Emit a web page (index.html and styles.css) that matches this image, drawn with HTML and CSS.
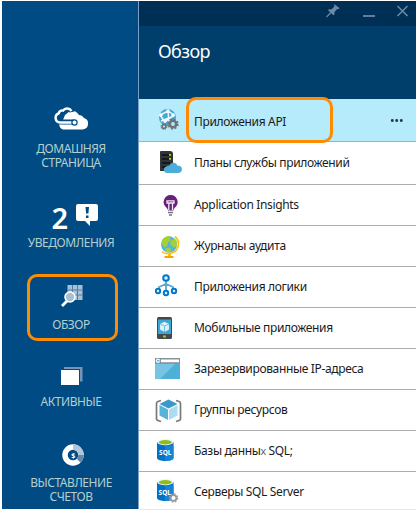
FILE: index.html
```html
<!DOCTYPE html>
<html lang="ru">
<head>
<meta charset="utf-8">
<title>Обзор</title>
<link rel="stylesheet" href="styles.css">
</head>
<body>
<div class="app">
  <nav class="side">
    <a class="tile home">
      <svg width="34" height="24" viewBox="0 0 34 24"><path d="M9 22.500a6 6 0 0 1-.5-11A9 9 0 0 1 25 8a6 6 0 0 1 5 3 5.900 5.900 0 0 1-1.500 11.500z" fill="#fff"/><path d="M20 15H6a4.200 4.200 0 0 1-.5-8.300C5 4 8 3.500 9 4c2-3.500 8-3 9 1" fill="none" stroke="#004b84" stroke-width="5"/><path d="M4 6h5l2-3 5 1-5 4-2 5-5 1z" fill="#004b84"/><path d="M20 15.500H6a4.700 4.700 0 0 1-1.300-9.100C5.300 4 7.500 3 9 3.600 11 .5 15.500 1 17.500 4" fill="none" stroke="#fff" stroke-width="2.400"/><circle cx="20.500" cy="15.500" r="2.600" fill="#fff" stroke="#004b84" stroke-width="1.200"/></svg>
      <span>ДОМАШНЯЯ<br>СТРАНИЦА</span>
    </a>
    <a class="tile notes">
      <div class="count"><b>2</b><svg width="22" height="22" viewBox="0 0 22 22"><path d="M2 0h18q2 0 2 2v13q0 2-2 2h-6v5l-5-5H2q-2 0-2-2V2q0-2 2-2z" fill="#fff"/><path d="M9.500 3h3.500l-.6 6.500h-2.300zM10 11.500h2.500V14H10z" fill="#004b84"/></svg></div>
      <span>УВЕДОМЛЕНИЯ</span>
    </a>
    <a class="tile browse">
      <svg width="22" height="22" viewBox="0 0 22 22"><path d="M6.500 0h15v15h-15z" fill="#a9bfd4"/><path d="M6.500 5h15M6.500 10h15M11.500 0v15M16.500 0v15" stroke="#4f7fa8"/><path d="M6 16l-5 5" stroke="#fff" stroke-width="2.800"/><circle cx="9" cy="12" r="5" fill="#a9bfd4" stroke="#fff" stroke-width="1.600"/></svg>
      <span>ОБЗОР</span>
    </a>
    <a class="tile active">
      <svg width="22" height="18" viewBox="0 0 22 18"><path d="M3 0h18.500v14.500H3z" fill="#7396b8"/><path d="M0 2h19v16H0z" fill="#004b84"/><path d="M0 3h18v15H0z" fill="#fff"/></svg>
      <span>АКТИВНЫЕ</span>
    </a>
    <a class="tile bill">
      <svg width="22" height="22" viewBox="0 0 22 22"><circle cx="11" cy="11" r="8" fill="none" stroke="#fff" stroke-width="5.500"/><path d="M11 3a8 8 0 0 1 8 8" fill="none" stroke="#b3c5da" stroke-width="5.500"/><path d="M19 11a8 8 0 0 1-2.300 5.700" fill="none" stroke="#6089b0" stroke-width="5.500"/><text class="dollar" x="11" y="13.500">$</text></svg>
      <span>ВЫСТАВЛЕНИЕ<br>СЧЕТОВ</span>
    </a>
  </nav>
  <main class="blade">
    <div class="bar">
      <svg width="88" height="14" viewBox="0 0 88 14" stroke="#6b8aa5" fill="none"><path d="M8 0l5.500 4-1 1.200-1.300-.2-2.700 3 0 2.200-1 1-5.500-5 1-1 2.400.2 3-3z" fill="#6b8aa5" stroke="none"/><path d="M5 8.500L.5 13" stroke-width="1.300"/><path d="M37 12h12" stroke-width="1.800"/><path d="M71.500 2l10 10M81.500 2l-10 10" stroke-width="1.500"/></svg>
    </div>
    <header><h1>Обзор</h1></header>
    <ul class="list">
      <li class="on"><svg viewBox="0 0 28 28"><circle cx="12.500" cy="11.500" r="8.500" fill="#45a9d6"/><path d="M5 9l8-4 6 4-9 7zM13 5l1 12M6 15l13-5M10 16L5 9" fill="none" stroke="#eefaff" stroke-width="1.400"/><g fill="#eefaff"><circle cx="13" cy="5" r="1.800"/><circle cx="6" cy="9" r="1.800"/><circle cx="10" cy="15" r="1.800"/><circle cx="18" cy="9" r="1.800"/></g><g fill="#b5ebfa" stroke="#6d7377"><circle cx="18" cy="18" r="3.200" stroke-width="2.600"/><circle cx="18" cy="18" r="4.900" stroke-width="1.500" stroke-dasharray="2 1.850" fill="none"/><circle cx="9" cy="20.500" r="1.900" stroke-width="1.600"/><circle cx="9" cy="20.500" r="3" stroke-width="1" stroke-dasharray="1.200 1.150" fill="none"/></g></svg><span>Приложения API</span><i class="dots"></i></li>
      <li><svg viewBox="0 0 28 28"><path d="M6 2h9q3 0 3 3v17H5V3q0-1 1-1z" fill="#303437"/><path d="M7 6h8M7 10h8M7 14h8M7 18h4" stroke="#0c0e0f" stroke-width="1.500"/><path d="M14 5.800h2M14 9.800h2" stroke="#a7d437" stroke-width="1.800"/><path d="M12 24a3.300 3.300 0 0 1-.5-6.500c1-1 2-1.200 3-1 1.500-4 7-3.500 8 .3 3.500-.6 5 2 4.300 4.500-.5 1.700-2 2.700-3.500 2.700z" fill="#4aaed8"/></svg><span>Планы службы приложений</span></li>
      <li><svg viewBox="0 0 28 28"><path d="M15.500 4a7 7 0 0 1 5 12c-1.500 1.400-2 2.500-2 3.500H13c0-1-.6-2.100-2.200-3.500A7 7 0 0 1 15.500 4z" fill="#68217a"/><path d="M13.800 19v-7M17.500 19v-7M12 9.800h7V12h-7zM13.800 12h3.700" fill="none" stroke="#f2e9f5" stroke-width="1.300"/><path d="M13 21.500h5M14 24h3" stroke="#737478" stroke-width="1.500"/></svg><span>Application Insights</span></li>
      <li><svg viewBox="0 0 28 28"><g transform="translate(.5 1.500)"><path d="M19.500 3c6 5 4 16-5.500 17-3.500.4-6-.5-7.500-2" fill="none" stroke="#ffc20e" stroke-width="1.700"/><path d="M14 20v3" stroke="#ffc20e" stroke-width="3"/><path d="M9 23.500h9" stroke="#f6a500" stroke-width="2"/><circle cx="13.500" cy="11" r="8" fill="#51b5e0"/><path d="M7 6c3-4 7-4 9-3l-2 2 2 2-3 1-1 4-3 2-3-4zM15 8l4-3c3 2 3 5 2 8l-3 1-3-3zM10 15l4-1 2 3-3 2c-2 0-3-1-3-1z" fill="#a5cf37"/></g></svg><span>Журналы аудита</span></li>
      <li><svg viewBox="0 0 28 28"><path d="M11 8v10M4 17v-3l7-3 7 3v3" fill="none" stroke="#5aa7d0" stroke-width="1.800"/><g fill="#dff3fc" stroke="#0079cd" stroke-width="2"><circle cx="11" cy="5" r="2.800"/><circle cx="3" cy="18" r="2.200"/><circle cx="11" cy="20" r="2.200"/><circle cx="19" cy="18" r="2.200"/></g></svg><span>Приложения логики</span></li>
      <li><svg viewBox="0 0 28 28"><rect x="2" y="3" width="15" height="22" rx="1.500" fill="#45494d"/><path d="M3 5.500h13v14.500H3z" fill="#3fa5d1"/><path d="M5 10l4.500-2.200L14 10v5.500L9.500 18 5 15.500z" fill="#d8f1fb"/><path d="M5 10l4.500 2L14 10M9.500 12v6" fill="none" stroke="#71bfe0"/><path d="M8.200 21.500h2.600v2H8.200z" fill="#a7d437"/></svg><span>Мобильные приложения</span></li>
      <li><svg viewBox="0 0 28 28"><path d="M0 3h25v21H0z" fill="#4eafd8"/><path d="M0 24V9h20L5 24z" fill="#79c3e3"/><path d="M0 3h25v5.500H0z" fill="#87939b"/><path d="M6 4.500h18v2.700H6z" fill="#fff"/><circle cx="3" cy="5.800" r="2.200" fill="#e7f8ff"/><path d="M2 5.800h2.500" stroke="#3999c7"/></svg><span>Зарезервированные IP-адреса</span></li>
      <li><svg viewBox="0 0 28 28"><path d="M6 4.500l-3 1q-1.500.5-1.500 2V23q0 1 1.500 1.500l3 1M21 4.500l3 1q1.500.5 1.500 2V23q0 1-1.500 1.500l-3 1" fill="none" stroke="#777a7d" stroke-width="1.700"/><path d="M13.500 3.500L22.500 8l-9 4.500L4.500 8z" fill="#3999c7"/><path d="M4.500 9l8.500 4.500V24l-8.500-4.500z" fill="#56b4db"/><path d="M22.500 9L14 13.500V24l8.500-4.500z" fill="#acdcef"/></svg><span>Группы ресурсов</span></li>
      <li><svg viewBox="0 0 28 28"><path d="M2 5v16c0 4 16.500 4 16.500 0V5z" fill="#0072c6"/><path d="M10 8.500h8.500V21c0 2-4 3-8.500 3z" fill="#1684d2"/><ellipse cx="10.300" cy="5.100" rx="8.200" ry="3.100" fill="#e9f4f9"/><ellipse cx="10.300" cy="5.300" rx="6.500" ry="2.200" fill="#8fbe1a"/><text class="sql" x="10.300" y="17.800">SQL</text></svg><span>Базы данны<small>х</small> SQL;</span></li>
      <li class="last"><svg viewBox="0 0 28 28"><path d="M2 5v16c0 4 16.500 4 16.500 0V5z" fill="#0072c6"/><path d="M10 8.500h8.500V21c0 2-4 3-8.500 3z" fill="#1684d2"/><ellipse cx="10.300" cy="5.100" rx="8.200" ry="3.100" fill="#e9f4f9"/><ellipse cx="10.300" cy="5.300" rx="6.500" ry="2.200" fill="#8fbe1a"/><text class="sql" x="9.800" y="17.800">SQL</text><circle cx="18.500" cy="21" r="2.900" fill="#fff" stroke="#96999c" stroke-width="1.800"/><circle cx="18.500" cy="21" r="4.200" fill="none" stroke="#96999c" stroke-width="1.200" stroke-dasharray="1.650 1.650"/></svg><span>Серверы SQL Server</span></li>
    </ul>
  </main>
</div>
</body>
</html>
```

FILE: styles.css
```css
*, *::after { box-sizing: border-box; }
body { margin: 0; background: #fff; font-family: "Noto Sans", "Open Sans", sans-serif; }
.app { display: grid; grid-template-columns: 136px 278px; height: 510px; padding: 1px 0 1px 2px; overflow: hidden; }
.side { background: #004b84; display: flex; flex-direction: column; align-items: center; color: #b4cfcd; }
.tile { position: relative; display: flex; flex-direction: column; align-items: center; justify-content: space-between; font-size: 12px; line-height: 14px; letter-spacing: -.45px; text-align: center; white-space: nowrap; flex: none; padding-left: 2px; }
.tile svg { display: block; }
.home { height: 63px; margin-top: 106px; }
.notes { height: 46px; margin-top: 34px; }
.count { display: flex; align-items: flex-start; gap: 8px; color: #fff; height: 26px; margin-left: 7px; }
.count b { font-size: 29px; line-height: 27px; font-weight: 600; }
.browse { height: 47px; margin-top: 35px; }
.browse > svg, .active > svg, .bill > svg { margin-left: 3px; }
.browse::after { content: ""; position: absolute; left: 50%; top: -11px; width: 91px; height: 67px; margin-left: -43px; border: 3px solid #ff8c00; border-radius: 10px; }
.active { height: 42px; margin-top: 35px; }
.bill { height: 60px; margin-top: 35px; }
.dollar { font: bold 7px "Noto Sans", sans-serif; fill: #fff; text-anchor: middle; }
.blade { border-left: 1px solid #7ba0c7; background: #fff; height: 508px; }
.bar { height: 25px; background: #002f55; display: flex; justify-content: flex-end; padding: 3px 2px 0 0; }
header { height: 73px; background: #003e6c; padding: 13px 0 0 19px; }
h1 { margin: 0; font-size: 18px; line-height: 24px; font-weight: 400; letter-spacing: -.6px; color: #fff; }
.list { list-style: none; margin: 0; padding: 0; display: grid; grid-template-rows: 43px 43px repeat(7, 41px) 38px; }
li { display: flex; align-items: center; border-bottom: 1px solid #aaacae; font-size: 12px; letter-spacing: -.34px; color: #1b1b1b; padding-left: 16px; position: relative; }
li svg { width: 28px; height: 28px; margin-right: 11px; flex: none; }
li span { white-space: nowrap; padding-bottom: 2px; }
li small { font-size: 11px; color: #666; }
.sql { font: bold 6.500px "Noto Sans", sans-serif; letter-spacing: 0; fill: #fff; text-anchor: middle; }
.on { background: #b5ebfa; }
.on span { padding: 2px 0 0; }
.on::after { content: ""; position: absolute; left: 47px; top: -2px; width: 147px; height: 46px; border: 3px solid #ff8c00; border-radius: 10px; z-index: 1; }
.last { border-bottom-color: #e4e6e8; }
.last span { padding: 1px 0 0; }
.dots { width: 13px; height: 3px; margin-left: auto; margin-right: 13px; background: radial-gradient(circle, #25333a 1.200px, transparent 1.600px) 0 0 / 4.500px 3px; }
```
